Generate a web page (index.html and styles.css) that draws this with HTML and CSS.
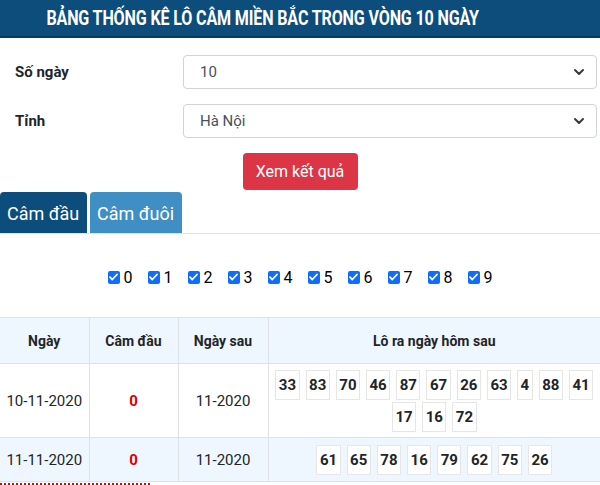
FILE: index.html
```html
<!DOCTYPE html>
<html lang="vi">
<head>
<meta charset="utf-8">
<link rel="stylesheet" href="styles.css">
</head>
<body>
<div class="page">
  <h1 class="title"><span class="title-text">BẢNG THỐNG KÊ LÔ CÂM MIỀN BẮC TRONG VÒNG 10 NGÀY</span></h1>
  <div class="form">
    <div class="form-row">
      <label class="lbl">Số ngày</label>
      <div class="select"><span>10</span>
        <svg class="chev" width="12" height="8" viewBox="0 0 12 8"><path d="M2 2l4 4 4-4" fill="none" stroke="#343a40" stroke-width="2" stroke-linecap="round" stroke-linejoin="round"/></svg>
      </div>
    </div>
    <div class="form-row">
      <label class="lbl">Tỉnh</label>
      <div class="select"><span>Hà Nội</span>
        <svg class="chev" width="12" height="8" viewBox="0 0 12 8"><path d="M2 2l4 4 4-4" fill="none" stroke="#343a40" stroke-width="2" stroke-linecap="round" stroke-linejoin="round"/></svg>
      </div>
    </div>
    <div class="btn-row"><button class="btn">Xem kết quả</button></div>
  </div>
  <div class="tabs">
    <div class="tab active">Câm đầu</div>
    <div class="tab">Câm đuôi</div>
  </div>
  <div class="checks">
    <label class="chk"><span class="box"><svg width="9" height="8" viewBox="0 0 9 8"><path d="M1 4.2l2.3 2.3L8 1.5" fill="none" stroke="#fff" stroke-width="1.8" stroke-linecap="round" stroke-linejoin="round"/></svg></span>0</label>
    <label class="chk"><span class="box"><svg width="9" height="8" viewBox="0 0 9 8"><path d="M1 4.2l2.3 2.3L8 1.5" fill="none" stroke="#fff" stroke-width="1.8" stroke-linecap="round" stroke-linejoin="round"/></svg></span>1</label>
    <label class="chk"><span class="box"><svg width="9" height="8" viewBox="0 0 9 8"><path d="M1 4.2l2.3 2.3L8 1.5" fill="none" stroke="#fff" stroke-width="1.8" stroke-linecap="round" stroke-linejoin="round"/></svg></span>2</label>
    <label class="chk"><span class="box"><svg width="9" height="8" viewBox="0 0 9 8"><path d="M1 4.2l2.3 2.3L8 1.5" fill="none" stroke="#fff" stroke-width="1.8" stroke-linecap="round" stroke-linejoin="round"/></svg></span>3</label>
    <label class="chk"><span class="box"><svg width="9" height="8" viewBox="0 0 9 8"><path d="M1 4.2l2.3 2.3L8 1.5" fill="none" stroke="#fff" stroke-width="1.8" stroke-linecap="round" stroke-linejoin="round"/></svg></span>4</label>
    <label class="chk"><span class="box"><svg width="9" height="8" viewBox="0 0 9 8"><path d="M1 4.2l2.3 2.3L8 1.5" fill="none" stroke="#fff" stroke-width="1.8" stroke-linecap="round" stroke-linejoin="round"/></svg></span>5</label>
    <label class="chk"><span class="box"><svg width="9" height="8" viewBox="0 0 9 8"><path d="M1 4.2l2.3 2.3L8 1.5" fill="none" stroke="#fff" stroke-width="1.8" stroke-linecap="round" stroke-linejoin="round"/></svg></span>6</label>
    <label class="chk"><span class="box"><svg width="9" height="8" viewBox="0 0 9 8"><path d="M1 4.2l2.3 2.3L8 1.5" fill="none" stroke="#fff" stroke-width="1.8" stroke-linecap="round" stroke-linejoin="round"/></svg></span>7</label>
    <label class="chk"><span class="box"><svg width="9" height="8" viewBox="0 0 9 8"><path d="M1 4.2l2.3 2.3L8 1.5" fill="none" stroke="#fff" stroke-width="1.8" stroke-linecap="round" stroke-linejoin="round"/></svg></span>8</label>
    <label class="chk"><span class="box"><svg width="9" height="8" viewBox="0 0 9 8"><path d="M1 4.2l2.3 2.3L8 1.5" fill="none" stroke="#fff" stroke-width="1.8" stroke-linecap="round" stroke-linejoin="round"/></svg></span>9</label>
  </div>
  <table class="tbl">
    <colgroup><col class="c1"><col class="c2"><col class="c3"><col class="c4"></colgroup>
    <thead>
      <tr><th>Ngày</th><th>Câm đầu</th><th>Ngày sau</th><th>Lô ra ngày hôm sau</th></tr>
    </thead>
    <tbody>
      <tr>
        <td>10-11-2020</td><td class="red">0</td><td>11-2020</td>
        <td class="nums"><span class="n">33</span><span class="n">83</span><span class="n">70</span><span class="n">46</span><span class="n">87</span><span class="n">67</span><span class="n">26</span><span class="n">63</span><span class="n">4</span><span class="n">88</span><span class="n">41</span><span class="n">17</span><span class="n">16</span><span class="n">72</span></td>
      </tr>
      <tr class="alt">
        <td>11-11-2020</td><td class="red">0</td><td>11-2020</td>
        <td class="nums"><span class="n">61</span><span class="n">65</span><span class="n">78</span><span class="n">16</span><span class="n">79</span><span class="n">62</span><span class="n">75</span><span class="n">26</span></td>
      </tr>
    </tbody>
  </table>
  <div class="dotted"></div>
</div>
</body>
</html>
```
FILE: styles.css
```css
* { box-sizing: border-box; }
html, body { margin: 0; padding: 0; background: #fff; }
body { font-family: Roboto, "Noto Sans", sans-serif; color: #212529; width: 600px; overflow: hidden; }
.page { width: 600px; }
.title {
  margin: 0;
  height: 38px;
  background: #0c4d7b;
  border-bottom: 2px solid #083a5e;
  color: #fff;
  font-size: 20px;
  font-weight: 700;
  display: flex;
  justify-content: center;
  align-items: center;
  padding-right: 74px;
  padding-bottom: 1px;
  white-space: nowrap;
  overflow: hidden;
}
.title-text { flex: none; display: block; transform: scaleX(0.805); letter-spacing: -0.2px; }
.form { padding: 17px 3px 2px 15px; }
.form-row { display: grid; grid-template-columns: 168px 1fr; align-items: center; margin-bottom: 15px; }
.lbl { font-weight: 700; font-size: 15px; color: #212529; }
.select {
  height: 34px;
  border: 1px solid #ced4da;
  border-radius: 4px;
  display: flex;
  align-items: center;
  justify-content: space-between;
  padding: 0 11px 0 16px;
  font-size: 15px;
  color: #495057;
}
.chev { display: block; }
.btn-row { display: flex; justify-content: center; margin-left: -12px; }
.btn {
  width: 115px;
  height: 37px;
  background: #dc3545;
  color: #fff;
  border: none;
  border-radius: 4px;
  font-family: Roboto, sans-serif;
  font-size: 16px;
  padding: 0;
}
.tabs { display: flex; gap: 3px; border-bottom: 1px solid #dee2e6; height: 42px; }
.tab {
  height: 41px;
  padding: 0 0 0 7px;
  border-radius: 4px 4px 0 0;
  background: #3f8ec4;
  color: #fff;
  font-size: 18px;
  line-height: 43px;
  white-space: nowrap;
}
.tab.active { background: #0c4d7b; width: 87px; }
.tab:not(.active) { width: 92px; }
.checks { display: flex; justify-content: center; gap: 15px; height: 83px; align-items: center; padding-top: 3px; }
.chk { display: flex; align-items: center; font-size: 16px; color: #000; gap: 4px; width: 25px; }
.box { width: 13px; height: 13px; border-radius: 2px; background: #0d6efd; display: flex; align-items: center; justify-content: center; }
.box svg { display: block; }
.tbl { width: 600px; border-collapse: collapse; table-layout: fixed; border-top: 1px solid #dee2e6; }
.c1 { width: 89px; } .c2 { width: 89px; } .c3 { width: 90px; } .c4 { width: 332px; }
.tbl th, .tbl td { border: 1px solid #dee2e6; text-align: center; padding: 0; }
.tbl th:first-child, .tbl td:first-child { border-left: none; }
.tbl th:last-child, .tbl td:last-child { border-right: none; }
.tbl thead th { background: #eef7ff; font-size: 14px; font-weight: 700; height: 46px; color: #212529; }
.tbl td { font-size: 15px; color: #212529; }
.tbl tbody tr:first-child td { height: 74px; }
.tbl tr.alt td { background: #eef7ff; height: 44px; }
.red { color: #e00000 !important; font-weight: 700; }
.nums { padding: 5px 3px 4px 3px !important; line-height: 0; }
.n {
  display: inline-block;
  height: 30px;
  line-height: 28px;
  padding: 0 2.5px;
  margin: 1px 3px;
  border: 1px solid #e6e6e6;
  background: #fff;
  font-weight: 700;
  font-size: 15px;
  color: #212529;
}
.dotted { width: 150px; border-top: 2px dotted #e00000; margin-top: 1px; }
```
